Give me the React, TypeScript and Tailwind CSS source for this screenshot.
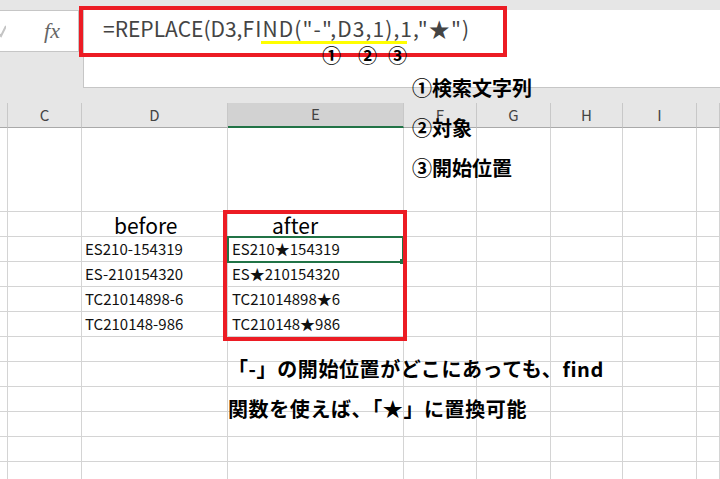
const cols = [8, 74, 146, 176, 73, 74, 72, 74, 23];
const letters = ["", "C", "D", "E", "F", "G", "H", "I", ""];

const jp = { fontFamily: '"Noto Sans CJK JP", "Noto Sans", sans-serif' };

const dataRows = [
  ["ES210-154319", "ES210★154319"],
  ["ES-210154320", "ES★210154320"],
  ["TC21014898-6", "TC21014898★6"],
  ["TC210148-986", "TC210148★986"],
];

function Row({ h, cells }: { h: number; cells?: React.ReactNode[] }) {
  return (
    <div className="grid grid-cols-[8px_74px_146px_176px_73px_74px_72px_74px_23px]" style={{ height: h }}>
      {cols.map((_, i) => (
        <div
          key={i}
          className="border-r border-b border-[#d4d4d4] flex items-center whitespace-nowrap text-[15px] text-[#111]"
        >
          {cells?.[i]}
        </div>
      ))}
    </div>
  );
}

export default function App() {
  return (
    <div className="relative w-[720px] h-[479px] overflow-hidden bg-white" style={jp}>
      {/* formula bar */}
      <div className="h-[103px] bg-[#e6e6e6] flex items-start pt-[10px] gap-[4px]">
        <div className="w-[79px] h-[42px] bg-white border-y border-r border-[#c6c6c6] flex items-center justify-between pl-0 pr-[18px]">
          <svg width="8" height="14" viewBox="0 0 8 14" className="-ml-[2px]">
            <path d="M0 9 L3 12 L8 2" stroke="#c4c4c4" strokeWidth="2" fill="none" />
          </svg>
          <span
            className="italic text-[22px] text-[#666] leading-none"
            style={{ fontFamily: '"Liberation Serif", "DejaVu Serif", serif' }}
          >
            fx
          </span>
        </div>
        <div className="flex-1 h-[78px] bg-white border-l border-b border-[#c6c6c6] pl-[19px] pt-[8px]">
          <span className="text-[21px] text-[#444] leading-none">
            =REPLACE(D3,
            <span className="tracking-[1.1px]">FIND("-",D3,1),1,"★")</span>
          </span>
        </div>
      </div>

      {/* column headers */}
      <div className="grid grid-cols-[8px_74px_146px_176px_73px_74px_72px_74px_23px] h-[25px] bg-[#e6e6e6]">
        {letters.map((l, i) => (
          <div
            key={i}
            className={
              "flex items-center justify-center text-[15px] text-[#444] border-r border-[#c8c8c8] " +
              (i === 3 ? "bg-[#d2d2d2] border-b-2 border-b-[#217346]" : "border-b border-b-[#a9a9a9]")
            }
          >
            {l}
          </div>
        ))}
      </div>

      {/* sheet */}
      <Row h={84} />
      <Row
        h={25}
        cells={[
          null,
          null,
          <span className="pl-[32px] pt-[3px] text-[21px] leading-none text-black">before</span>,
          <span className="pl-[44px] pt-[3px] text-[21px] leading-none text-black">after</span>,
        ]}
      />
      {dataRows.map(([a, b], i) => (
        <Row
          key={i}
          h={25}
          cells={[null, null, <span className="pl-[3px]">{a}</span>, <span className="pl-[4px]">{b}</span>]}
        />
      ))}
      {Array.from({ length: 7 }).map((_, i) => (
        <Row key={"e" + i} h={25} />
      ))}

      {/* overlays */}
      <div className="absolute left-[79px] top-[6px] w-[428px] h-[51px] border-4 border-[#ec1c24]" />
      <div className="absolute left-[261px] top-[41px] w-[146px] h-[3px] bg-[#ffff00]" />
      <div className="absolute top-[45px] left-[322px] flex text-[19px] font-bold text-black leading-none">
        <span className="w-[36px]">①</span>
        <span className="w-[30px]">②</span>
        <span>③</span>
      </div>

      <div className="absolute left-[412px] top-[76px] flex flex-col gap-[16px] text-[20px] font-bold text-black leading-[24px]">
        <span>①検索文字列</span>
        <span>②対象</span>
        <span>③開始位置</span>
      </div>

      {/* selected cell */}
      <div className="absolute left-[227px] top-[236px] w-[177px] h-[27px] border-2 border-[#217346]" />
      <div className="absolute left-[400px] top-[259px] w-[5px] h-[5px] bg-[#217346]" />

      <div className="absolute left-[223px] top-[210px] w-[184px] h-[131px] border-4 border-[#ec1c24]" />

      <div className="absolute left-[228px] top-[357px] flex flex-col gap-[16px] text-[20px] font-bold text-black leading-[24px] tracking-[0.6px]">
        <span>「-」の開始位置がどこにあっても、find</span>
        <span>関数を使えば、「★」に置換可能</span>
      </div>
    </div>
  );
}
